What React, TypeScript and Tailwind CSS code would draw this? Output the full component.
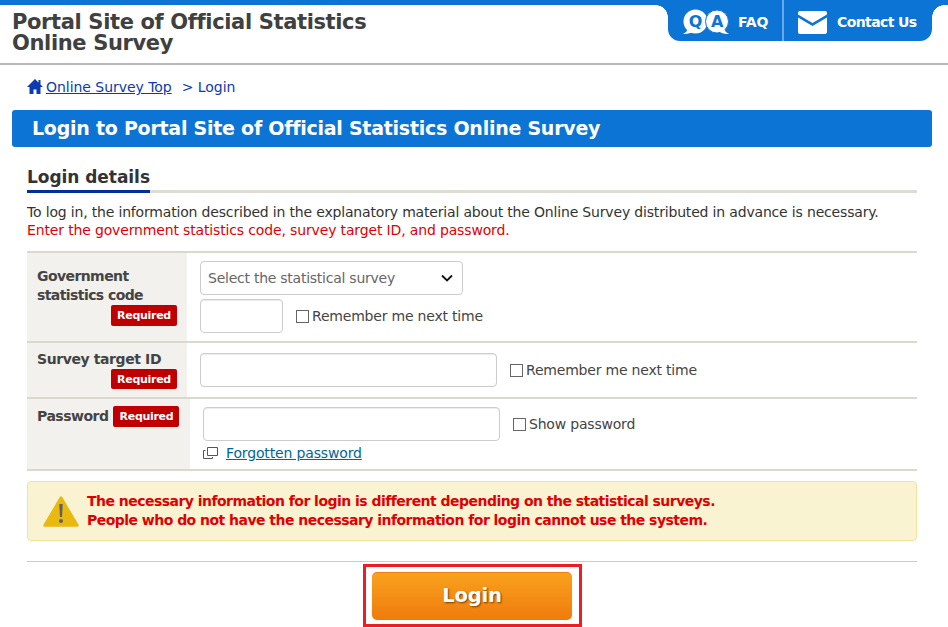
const font = { fontFamily: '"DejaVu Sans", Verdana, sans-serif' }

function Required({ className = '' }: { className?: string }) {
  return (
    <span className={`inline-flex w-[66px] shrink-0 items-center justify-center rounded-[2px] bg-[#c00000] text-[11px] font-bold text-white tracking-[-0.3px] ${className}`}>
      Required
    </span>
  )
}

function Check({ label }: { label: string }) {
  return (
    <label className="flex items-center text-[14px] text-[#444] tracking-[-0.2px]">
      <span className="mr-[3px] h-[13px] w-[13px] border border-[#666] bg-white" />
      {label}
    </label>
  )
}

function Field({ className }: { className: string }) {
  return <div className={`h-[34px] rounded-[4px] border border-[#ccc] bg-white shadow-[inset_0_1px_1px_rgba(0,0,0,0.08)] ${className}`} />
}

function QaIcon() {
  return (
    <svg width="46" height="26" viewBox="0 0 46 26" className="mr-[9px] shrink-0">
      <circle cx="12.500" cy="12.500" r="12" fill="#fff" />
      <path d="M5 20q-1 3-5 5 6 0 9-2z" fill="#fff" />
      <circle cx="34" cy="12.500" r="11.500" fill="#fff" stroke="#0b74d5" strokeWidth="1" />
      <path d="M41 20q1 3 5 5-6 0-9-2z" fill="#fff" />
      <text x="12.500" y="18" textAnchor="middle" fontSize="16" fontWeight="700" fill="#0b74d5" fontFamily="DejaVu Sans">Q</text>
      <text x="34" y="18" textAnchor="middle" fontSize="16" fontWeight="700" fill="#0b74d5" fontFamily="DejaVu Sans">A</text>
    </svg>
  )
}

function MailIcon() {
  return (
    <svg width="29" height="23" viewBox="0 0 29 23" className="mr-[10px] shrink-0">
      <path d="M2 0h25a2 2 0 0 1 2 2v1.500L14.500 12 0 3.500V2a2 2 0 0 1 2-2z" fill="#fff" />
      <path d="M0 6.500l14.500 8.500L29 6.500V21a2 2 0 0 1-2 2H2a2 2 0 0 1-2-2z" fill="#fff" />
    </svg>
  )
}

export default function App() {
  return (
    <div style={font} className="h-[627px] w-[948px] overflow-hidden bg-white text-[#333]">
      <header className="h-[65px] border-b-2 border-[#b9b9b9] border-t-[5px] border-t-[#0b74d5]">
        <div className="flex items-start pr-1">
          <h1 className="flex-1 pl-3 pt-[7px] text-[21px] font-bold leading-[21px] text-[#404040] tracking-[-0.36px]">
            Portal Site of Official Statistics
            <br />
            Online Survey
          </h1>
          <span className="h-3 w-3 bg-[radial-gradient(circle_at_0_100%,#fff_11.500px,#0b74d5_12px)]" />
          <nav className="-mt-[5px] flex h-[41px] w-[264px] items-center rounded-b-[12px] bg-[#0b74d5] text-[14px] font-bold whitespace-nowrap text-white">
            <a className="flex h-full w-[114px] items-center pl-[15px] pt-[3px] tracking-[-0.2px]">
              <QaIcon />
              FAQ
            </a>
            <span className="h-full w-[2px] bg-[#6aa8e6]" />
            <a className="flex h-full flex-1 items-center pl-[14px] pt-[3px] tracking-[-0.6px]">
              <MailIcon />
              Contact Us
            </a>
          </nav>
          <span className="h-3 w-3 bg-[radial-gradient(circle_at_100%_100%,#fff_11.500px,#0b74d5_12px)]" />
        </div>
      </header>

      <nav className="flex items-center pl-[27px] pt-[13px] text-[14px] leading-[18px] text-[#0b3bb0] tracking-[-0.04px]">
        <svg width="16" height="15" viewBox="0 0 16 15" className="mr-[3px] -translate-y-[1px]">
          <path d="M8 0 0 8h2.500v7h4v-4.500h3V15h4V8H16l-2.500-2.500V1h-2v2.500z" fill="#0b3bb0" />
        </svg>
        <a className="underline">Online Survey Top</a>
        <span className="ml-[10px]">&gt; Login</span>
      </nav>

      <h2 className="ml-3 mr-4 mt-[14px] h-[37px] rounded-[3px] bg-[#0b74d5] pl-5 text-[19px] font-bold leading-[36px] text-white tracking-[-0.25px]">
        Login to Portal Site of Official Statistics Online Survey
      </h2>

      <main className="ml-[27px] mr-[31px]">
        <h3 className="mt-[18px] border-b-[3px] border-[#deddd5] text-[17px] font-bold leading-[25px]">
          <span className="-mb-[3px] inline-block border-b-[3px] border-[#00309c] tracking-[-0.05px]">Login details</span>
        </h3>

        <p className="mt-[10px] text-[14px] leading-[18px] text-[#333] tracking-[-0.175px]">
          To log in, the information described in the explanatory material about the Online Survey distributed in advance is necessary.
          <br />
          <span className="tracking-[-0.15px] text-[#e00000]">Enter the government statistics code, survey target ID, and password.</span>
        </p>

        <div className="mt-[12px] border-t-2 border-[#dbd9cd]">
          <div className="flex h-[90px] border-b-2 border-[#dbd9cd]">
            <div className="flex w-[160px] flex-col bg-[#f2f1ed] px-[10px] pt-[14px] text-[14px] font-bold leading-[19px] text-[#444] tracking-[-0.58px]">
              Government statistics code
              <Required className="h-[21px] self-end" />
            </div>
            <div className="flex flex-col pl-[13px] pt-[8px]">
              <div className="flex h-[34px] w-[263px] items-center justify-between rounded-[4px] border border-[#ccc] bg-white pl-[7px] pr-[9px] text-[14px] text-[#666] tracking-[-0.25px]">
                Select the statistical survey
                <svg width="12" height="8" viewBox="0 0 12 8"><path d="M1 1.500l5 5 5-5" fill="none" stroke="#111" strokeWidth="1.800" /></svg>
              </div>
              <div className="mt-[4px] flex items-center">
                <Field className="w-[83px]" />
                <span className="ml-[13px]"><Check label="Remember me next time" /></span>
              </div>
            </div>
          </div>

          <div className="flex h-[56px] border-b-2 border-[#dbd9cd]">
            <div className="flex w-[160px] flex-col bg-[#f2f1ed] px-[10px] pt-[7px] text-[14px] font-bold leading-[19px] text-[#444] tracking-[-0.4px]">
              Survey target ID
              <Required className="h-[20px] self-end" />
            </div>
            <div className="flex items-start pl-[13px] pt-[10px]">
              <Field className="w-[297px]" />
              <span className="ml-[13px] pt-[7px]"><Check label="Remember me next time" /></span>
            </div>
          </div>

          <div className="flex h-[72px] border-b-2 border-[#dbd9cd]">
            <div className="flex w-[163px] items-start bg-[#f2f1ed] pl-[10px] pt-[8px] text-[14px] font-bold leading-[19px] text-[#444] tracking-[-0.5px]">
              Password
              <Required className="-mt-[1px] ml-[5px] h-[21px] tracking-[-0.3px]" />
            </div>
            <div className="pl-[13px] pt-[8px]">
              <div className="flex items-start">
                <Field className="w-[297px]" />
                <span className="ml-[13px] pt-[7px]"><Check label="Show password" /></span>
              </div>
              <div className="mt-[3px] flex items-center text-[14px] leading-[18px] text-[#006699] tracking-[-0.15px]">
                <svg width="15" height="14" viewBox="0 0 15 14" className="mr-2">
                  <path d="M4.500 1.500h10v8h-10zM2.500 4.500H.500v8h9v-1.500" fill="none" stroke="#555" />
                </svg>
                <a className="underline">Forgotten password</a>
              </div>
            </div>
          </div>
        </div>

        <div className="mt-[10px] flex h-[60px] items-center rounded-[4px] border border-[#f3e39a] bg-[#f9f3d1] pl-[15px] text-[14px] font-bold leading-[19px] text-[#e00000] tracking-[-0.53px]">
          <svg width="36" height="31" viewBox="0 0 36 31" className="mr-[8px] shrink-0">
            <path d="M18 1.500 L34.500 29.500 H1.500 Z" fill="#eab90f" stroke="#eab90f" strokeWidth="2.500" strokeLinejoin="round" />
            <path d="M16.300 8h3.400l-.7 13h-2z" fill="#5f5f5f" />
            <circle cx="18" cy="25" r="2" fill="#5f5f5f" />
          </svg>
          <p>
            The necessary information for login is different depending on the statistical surveys.
            <br />
            People who do not have the necessary information for login cannot use the system.
          </p>
        </div>

        <div className="mt-[20px] flex justify-center border-t border-[#ccc] pt-[2px]">
          <div className="border-[3px] border-[#ee1c25] pb-[4px] pl-[6px] pr-[7px] pt-[5px]">
            <button className="block h-[48px] w-[200px] rounded-[5px] border-t border-[#f08010] bg-gradient-to-b from-[#f9a11d] to-[#ef7b0c] pb-[2px] pl-[1px] text-[19.500px] font-bold text-white tracking-[-0.2px] [text-shadow:1px_1px_2px_#7a4000]">
              Login
            </button>
          </div>
        </div>
      </main>
    </div>
  )
}
